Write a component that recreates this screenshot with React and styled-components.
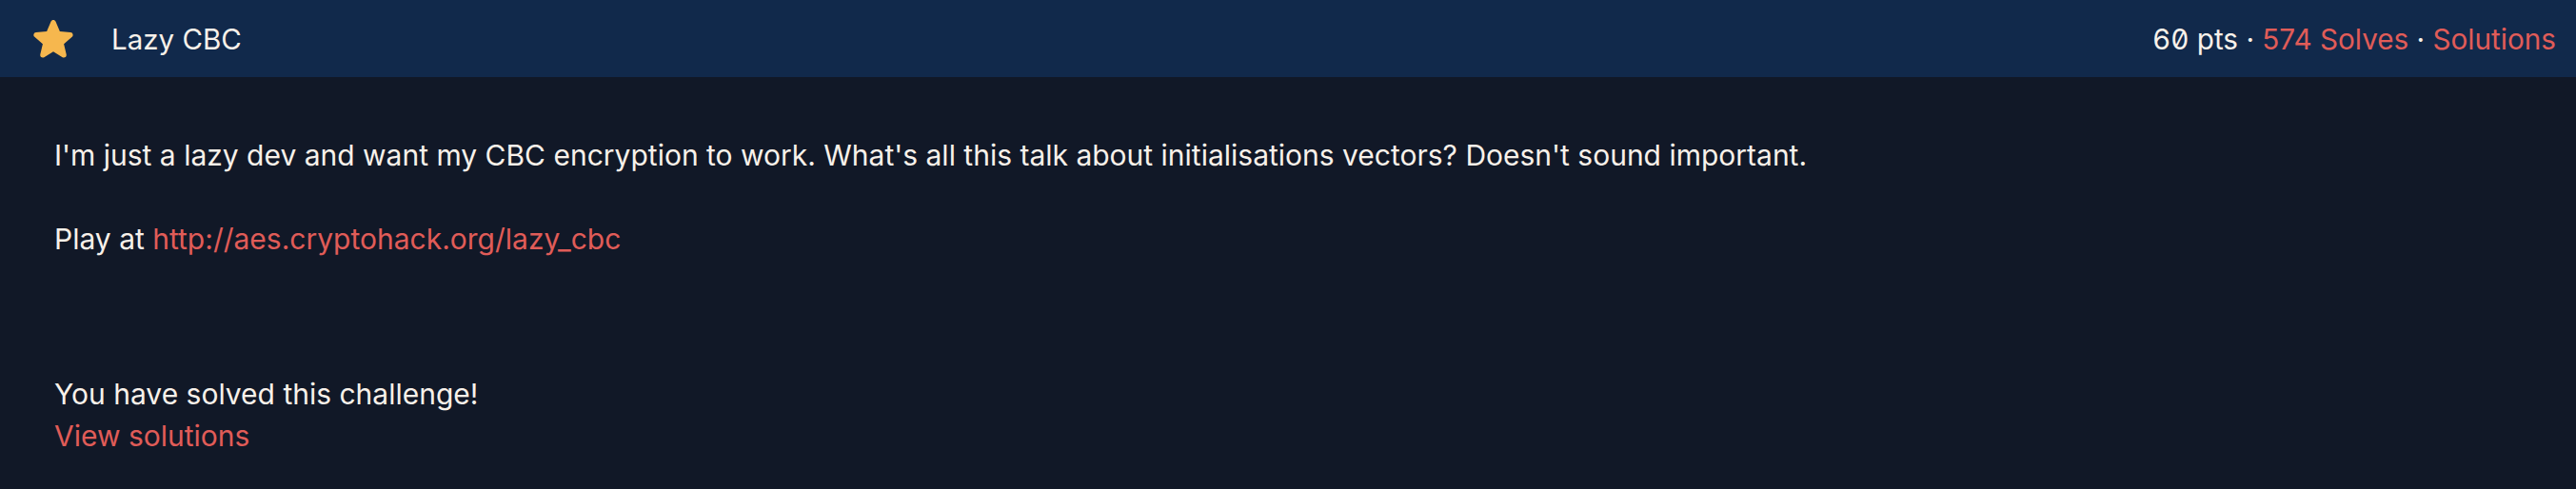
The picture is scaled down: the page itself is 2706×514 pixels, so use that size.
import React from 'react';
import { createGlobalStyle, styled } from 'styled-components';

const GlobalStyle = createGlobalStyle`
  html, body {
    margin: 0;
    padding: 0;
    background: #111827;
  }
  body {
    font-family: Inter, "Noto Sans", sans-serif;
    color: #f8f1ea;
  }
`;

const Card = styled.section`
  width: 100%;
  min-height: 514px;
  background: #111827;
`;

const Header = styled.header`
  height: 81px;
  display: flex;
  align-items: center;
  justify-content: space-between;
  padding: 0 21px 0 31px;
  background: #11294b;
`;

const TitleBox = styled.div`
  display: flex;
  align-items: center;
  gap: 36px;
`;

const Title = styled.h2`
  margin: 0;
  font-size: 29.5px;
  font-weight: 400;
  color: #f8f1ea;
`;

const Meta = styled.div`
  font-size: 29.7px;
  color: #f8f1ea;
  white-space: nowrap;
`;

const Points = styled.span`
  font-feature-settings: "tnum" 1, "zero" 1;
`;

const Link = styled.a`
  color: #e05c58;
  text-decoration: none;
`;

const Body = styled.div`
  padding: 60px 57px 34px;
  font-size: 30px;
  line-height: 44px;
`;

const Para = styled.p`
  margin: 0 0 ${props => props.$gap || 0}px;
`;

function Star() {
  return (
    <svg width="50" height="50" viewBox="0 0 24 24" fill="#f6b74e">
      <path d="M10.788 3.21c.448-1.077 1.976-1.077 2.424 0l2.082 5.006 5.404.434c1.164.093 1.636 1.545.749 2.305l-4.117 3.527 1.257 5.273c.271 1.136-.964 2.033-1.960 1.425L12 18.354 7.373 21.18c-.996.608-2.231-.29-1.96-1.425l1.257-5.273-4.117-3.527c-.887-.76-.415-2.212.749-2.305l5.404-.434 2.082-5.005Z" />
    </svg>
  );
}

export default function App() {
  return (
    <>
      <GlobalStyle />
      <Card>
        <Header>
          <TitleBox>
            <Star />
            <Title>Lazy CBC</Title>
          </TitleBox>
          <Meta>
            <Points>60</Points> pts · <Link href="#">574 Solves</Link> · <Link href="#">Solutions</Link>
          </Meta>
        </Header>
        <Body>
          <Para $gap={44}>
            I'm just a lazy dev and want my CBC encryption to work. What's all this talk about initialisations vectors? Doesn't sound important.
          </Para>
          <Para $gap={119}>
            Play at <Link href="#">http://aes.cryptohack.org/lazy_cbc</Link>
          </Para>
          <Para>You have solved this challenge!</Para>
          <Para>
            <Link href="#">View solutions</Link>
          </Para>
        </Body>
      </Card>
    </>
  );
}
